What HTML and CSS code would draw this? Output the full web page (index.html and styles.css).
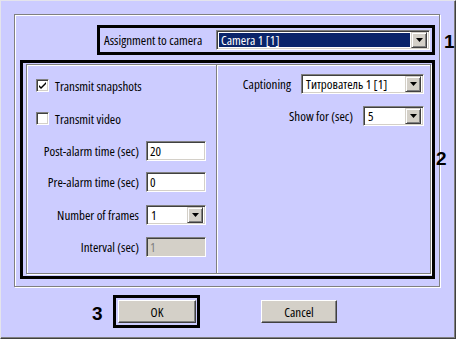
FILE: index.html
```html
<!DOCTYPE html>
<html lang="en">
<head>
  <meta charset="UTF-8">
  <title>Assignment to camera</title>
  <link rel="stylesheet" href="styles.css">
</head>
<body>
  <div class="window">
    <div class="group">
      <!-- 1: camera -->
      <div class="mark mark-camera">
        <span class="label">Assignment to camera</span>
        <div class="combo combo-camera">
          <span class="combo-text selected">Camera 1 [1]</span>
          <span class="drop"><svg width="7" height="4" viewBox="0 0 7 4"><path d="M0 0h7L3.5 4z" fill="#000"/></svg></span>
        </div>
      </div>

      <!-- 2: settings -->
      <div class="mark mark-settings">
        <div class="panel">
          <div class="col col-left">
            <div class="check-row row-first">
              <span class="check checked"><svg width="9" height="9" viewBox="0 0 9 9"><path d="M1 4l2 2 5-5v2l-5 5-2-2z" fill="#000"/></svg></span>
              <span class="label">Transmit snapshots</span>
            </div>
            <div class="check-row row-video">
              <span class="check"></span>
              <span class="label">Transmit video</span>
            </div>
            <div class="field-row row-post">
              <span class="field-label">Post-alarm time (sec)</span>
              <span class="edit">20</span>
            </div>
            <div class="field-row row-pre">
              <span class="field-label">Pre-alarm time (sec)</span>
              <span class="edit">0</span>
            </div>
            <div class="field-row row-frames">
              <span class="field-label">Number of frames</span>
              <div class="combo combo-small">
                <span class="combo-text">1</span>
                <span class="drop"><svg width="7" height="4" viewBox="0 0 7 4"><path d="M0 0h7L3.5 4z" fill="#000"/></svg></span>
              </div>
            </div>
            <div class="field-row row-interval">
              <span class="field-label">Interval (sec)</span>
              <span class="edit disabled">1</span>
            </div>
          </div>
          <div class="col col-right">
            <div class="field-row row-caption">
              <span class="label">Captioning</span>
              <div class="combo combo-caption">
                <span class="combo-text">Титрователь 1 [1]</span>
                <span class="drop"><svg width="7" height="4" viewBox="0 0 7 4"><path d="M0 0h7L3.5 4z" fill="#000"/></svg></span>
              </div>
            </div>
            <div class="field-row row-show">
              <span class="label">Show for (sec)</span>
              <div class="combo combo-show">
                <span class="combo-text">5</span>
                <span class="drop"><svg width="7" height="4" viewBox="0 0 7 4"><path d="M0 0h7L3.5 4z" fill="#000"/></svg></span>
              </div>
            </div>
          </div>
        </div>
      </div>
    </div>

    <!-- 3: buttons -->
    <div class="buttons">
      <div class="mark mark-ok">
        <button class="btn btn-ok">OK</button>
      </div>
      <button class="btn btn-cancel">Cancel</button>
    </div>

    <span class="num num-1">1</span>
    <span class="num num-2">2</span>
    <span class="num num-3">3</span>
  </div>
</body>
</html>
```

FILE: styles.css
```css
* {
  margin: 0;
  padding: 0;
  box-sizing: border-box;
}

body {
  font-family: 'Open Sans', 'Liberation Sans', Arial, sans-serif;
  font-stretch: 77%;
  font-size: 13px;
  color: #000;
  background-color: #ccccff;
  white-space: nowrap;
}

.window {
  position: relative;
  width: 456px;
  height: 339px;
  background-color: #ccccff;
  border: 1px solid;
  border-color: #e4e4ec #404040 #404040 #e4e4ec;
  box-shadow: inset -1px -1px 0 #808080;
  padding: 13px 0 0 13px;
}

/* etched frames */
.group {
  width: 426px;
  height: 273px;
  border: 1px solid #808080;
  box-shadow: inset 1px 1px 0 #fff, 1px 1px 0 #fff;
  padding: 10px 0 0 0;
}

.mark {
  border: 3px solid #000;
}

.mark-camera {
  display: flex;
  align-items: center;
  margin-left: 82px;
  width: 338px;
  height: 30px;
  padding: 0 2px 0 4px;
}

.mark-camera .label {
  flex: 1;
}

.mark-settings {
  margin: 5px 0 0 5px;
  width: 415px;
  height: 219px;
  padding: 1px 0 0 3px;
}

.panel {
  display: flex;
  width: 405px;
  height: 210px;
  border: 1px solid #808080;
  box-shadow: inset 1px 1px 0 #fff, 1px 1px 0 #fff;
}

.col-left {
  width: 190px;
  border-right: 1px solid #808080;
}

.col-right {
  flex: 1;
  box-shadow: inset 1px 0 0 #fff;
  padding-right: 6px;
}

.check-row {
  display: flex;
  align-items: center;
  height: 13px;
  padding-left: 9px;
  gap: 6px;
}

.row-first { margin-top: 14px; }
.row-video { margin-top: 20px; }
.row-post { margin-top: 16px; }
.row-pre { margin-top: 11px; }
.row-frames { margin-top: 13px; }
.row-interval { margin-top: 12px; }
.row-caption { margin-top: 9px; }
.row-show { margin-top: 12px; }

.check {
  display: flex;
  align-items: center;
  justify-content: center;
  width: 13px;
  height: 13px;
  background-color: #fff;
  border: 1px solid;
  border-color: #808080 #fff #fff #808080;
  box-shadow: inset 1px 1px 0 #404040, inset -1px -1px 0 #d4d0c8;
}

.field-row {
  display: flex;
  align-items: center;
  height: 20px;
}

.col-left .field-row {
  gap: 7px;
}

.field-label {
  width: 112px;
  text-align: right;
}

.col-right .field-row {
  justify-content: flex-end;
  gap: 10px;
}

/* sunken edit box */
.edit,
.combo {
  display: flex;
  flex-shrink: 0;
  align-items: center;
  height: 20px;
  background-color: #fff;
  border: 1px solid;
  border-color: #808080 #fff #fff #808080;
  box-shadow: inset 1px 1px 0 #404040, inset -1px -1px 0 #d4d0c8;
}

.edit {
  width: 60px;
  padding-left: 3px;
}

.edit.disabled {
  background-color: #d4d0c8;
  color: #808080;
}

.combo {
  padding: 2px;
}

.combo-text {
  flex: 1;
  padding-left: 2px;
  height: 100%;
  display: flex;
  align-items: center;
}

.combo-text.selected {
  background-color: #0a246a;
  color: #fff;
  margin-right: 1px;
}

.drop {
  display: flex;
  align-items: center;
  justify-content: center;
  width: 16px;
  height: 16px;
  background-color: #d4d0c8;
  border: 1px solid;
  border-color: #d4d0c8 #404040 #404040 #d4d0c8;
  box-shadow: inset 1px 1px 0 #fff, inset -1px -1px 0 #808080;
}

.combo-camera {
  width: 214px;
}

.combo-small {
  width: 60px;
}

.combo-caption {
  width: 123px;
}

.combo-show {
  width: 61px;
}

/* buttons */
.buttons {
  display: flex;
  align-items: center;
  margin: 8px 0 0 99px;
}

.mark-ok {
  width: 87px;
  height: 33px;
  padding: 2px;
}

.btn {
  font-family: inherit;
  font-stretch: inherit;
  font-size: 13px;
  height: 23px;
  background-color: #d4d0c8;
  border: 1px solid;
  border-color: #fff #404040 #404040 #fff;
  box-shadow: inset -1px -1px 0 #808080;
}

.btn-ok {
  width: 78px;
}

.btn-cancel {
  width: 76px;
  margin-left: 61px;
}

/* callout numbers */
.num {
  position: absolute;
  font-family: 'Liberation Sans', Arial, sans-serif;
  font-stretch: normal;
  font-size: 19px;
  font-weight: 700;
  line-height: 1;
}

.num-1 { left: 443px; top: 31px; }
.num-2 { left: 435px; top: 148px; }
.num-3 { left: 91px; top: 303px; }
```
